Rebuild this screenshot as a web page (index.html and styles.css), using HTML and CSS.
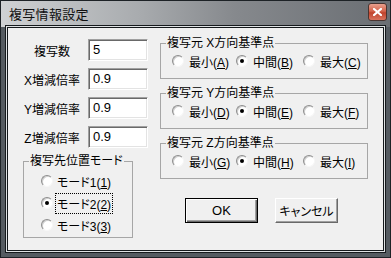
FILE: index.html
```html
<!DOCTYPE html>
<html lang="ja">
<head>
    <meta charset="UTF-8">
    <title>複写情報設定</title>
    <link rel="stylesheet" href="styles.css">
</head>
<body>
    <div class="window">
        <div class="titlebar">
            <span class="title">複写情報設定</span>
            <span class="close-btn">
                <svg width="9" height="8" viewBox="0 0 9 8"><path d="M1 1 L8 7 M8 1 L1 7" stroke="#fff" stroke-width="2.2" stroke-linecap="square"/></svg>
            </span>
        </div>

        <div class="client">
            <div class="left-col">
                <div class="field">
                    <label class="field-label">複写数</label>
                    <div class="edit">5</div>
                </div>
                <div class="field">
                    <label class="field-label">X増減倍率</label>
                    <div class="edit">0.9</div>
                </div>
                <div class="field">
                    <label class="field-label">Y増減倍率</label>
                    <div class="edit">0.9</div>
                </div>
                <div class="field">
                    <label class="field-label">Z増減倍率</label>
                    <div class="edit">0.9</div>
                </div>

                <fieldset class="group mode-group">
                    <legend>複写先位置モード</legend>
                    <div class="mode-options">
                        <div class="radio"><span class="dot"></span><span class="rtext">モード1(<u>1</u>)</span></div>
                        <div class="radio"><span class="dot checked"></span><span class="rtext focused">モード2(<u>2</u>)</span></div>
                        <div class="radio"><span class="dot"></span><span class="rtext">モード3(<u>3</u>)</span></div>
                    </div>
                </fieldset>
            </div>

            <div class="right-col">
                <fieldset class="group axis-group">
                    <legend>複写元 X方向基準点</legend>
                    <div class="axis-options">
                        <div class="radio"><span class="dot"></span><span class="rtext">最小(<u>A</u>)</span></div>
                        <div class="radio"><span class="dot checked"></span><span class="rtext">中間(<u>B</u>)</span></div>
                        <div class="radio"><span class="dot"></span><span class="rtext">最大(<u>C</u>)</span></div>
                    </div>
                </fieldset>
                <fieldset class="group axis-group">
                    <legend>複写元 Y方向基準点</legend>
                    <div class="axis-options">
                        <div class="radio"><span class="dot"></span><span class="rtext">最小(<u>D</u>)</span></div>
                        <div class="radio"><span class="dot checked"></span><span class="rtext">中間(<u>E</u>)</span></div>
                        <div class="radio"><span class="dot"></span><span class="rtext">最大(<u>F</u>)</span></div>
                    </div>
                </fieldset>
                <fieldset class="group axis-group">
                    <legend>複写元 Z方向基準点</legend>
                    <div class="axis-options">
                        <div class="radio"><span class="dot"></span><span class="rtext">最小(<u>G</u>)</span></div>
                        <div class="radio"><span class="dot checked"></span><span class="rtext">中間(<u>H</u>)</span></div>
                        <div class="radio"><span class="dot"></span><span class="rtext">最大(<u>I</u>)</span></div>
                    </div>
                </fieldset>

                <div class="buttons">
                    <button class="btn btn-default">OK</button>
                    <button class="btn btn-cancel">キャンセル</button>
                </div>
            </div>
        </div>
    </div>
</body>
</html>
```

FILE: styles.css
```css
:root {
    --face: #f0f0f0;
    --text: #000;
    --shadow: #a0a0a0;
    --dark-shadow: #696969;
    --frame: #555b61;
    --ui-font: "Liberation Sans", "Noto Sans CJK JP", sans-serif;
}

body {
    margin: 0;
    padding: 0;
    background: #fff;
    font-family: var(--ui-font);
    font-feature-settings: "palt";
    color: var(--text);
}

.window {
    width: 391px;
    height: 258px;
    box-sizing: border-box;
    border: 1px solid #1d2226;
    background: var(--frame);
    display: flex;
    flex-direction: column;
}

/* title bar */
.titlebar {
    height: 26px;
    flex: none;
    display: flex;
    align-items: center;
    justify-content: space-between;
    padding: 0 3px 0 8px;
    background: linear-gradient(to right, #cfd1d3 0%, #a9acaf 35%, #86898d 60%, #6a6e73 100%);
}

.title {
    font-size: 13px;
    color: #111;
    letter-spacing: 0.3px;
    margin-top: -1px;
}

.close-btn {
    width: 19px;
    height: 18px;
    box-sizing: border-box;
    margin-top: -4px;
    border: 1px solid #4a3430;
    border-radius: 3px;
    background: linear-gradient(to bottom, #e8a08e 0%, #d4624a 45%, #c0432c 55%, #d9735d 100%);
    display: flex;
    align-items: center;
    justify-content: center;
}

/* dialog body */
.client {
    margin: 0 6px 6px;
    flex: 1;
    border: 1px solid #15191c;
    box-shadow: 0 0 0 1px #dfe2e4, 0 0 0 2px #15191c;
    background: var(--face);
    display: flex;
    align-items: flex-start;
    font-size: 12px;
}

.left-col {
    width: 140px;
    padding: 11px 0 0 12px;
    display: flex;
    flex-direction: column;
    gap: 7px;
}

.field {
    display: flex;
    align-items: center;
}

.field-label {
    width: 64px;
    margin-right: 4px;
    text-align: center;
    font-size: 12px;
}

.edit {
    width: 60px;
    height: 22px;
    box-sizing: border-box;
    border: 1px solid;
    border-color: var(--shadow) #fff #fff var(--shadow);
    box-shadow: inset 1px 1px 0 var(--dark-shadow), inset -1px -1px 0 #e3e3e3;
    background: #fff;
    padding: 0 0 0 4px;
    font-size: 13px;
    line-height: 20px;
}

/* group boxes */
.group {
    margin: 0;
    padding: 0 0 0 5px;
    min-width: 0;
    border: 1px solid #a6a6a6;
}

.group legend {
    padding: 0 1px;
    font-size: 12px;
    line-height: 14px;
}

.mode-group {
    width: 110px;
    box-sizing: border-box;
    margin: -1px 0 0 3px;
}

.mode-options {
    padding: 5px 0 4px 12px;
    display: flex;
    flex-direction: column;
    gap: 6px;
}

.right-col {
    width: 208px;
    padding-top: 8px;
    display: flex;
    flex-direction: column;
    gap: 7px;
}

.axis-options {
    padding: 3px 0 9px 6px;
    display: grid;
    grid-template-columns: 64px 67px auto;
}

.radio {
    height: 16px;
    display: flex;
    align-items: center;
    gap: 5px;
    white-space: nowrap;
}

.mode-options .radio {
    gap: 4px;
}

.dot {
    width: 12px;
    height: 12px;
    box-sizing: border-box;
    border-radius: 50%;
    border: 1px solid;
    border-color: #8d8d8d #f6f6f6 #f6f6f6 #8d8d8d;
    box-shadow: inset 1px 1px 0 #cfcfcf;
    background: #fff;
    display: flex;
    align-items: center;
    justify-content: center;
    flex: none;
}

.dot.checked::after {
    content: "";
    width: 4px;
    height: 4px;
    border-radius: 50%;
    background: #000;
}

.rtext u {
    text-underline-offset: 1px;
}

.focused {
    outline: 1px dotted #000;
    outline-offset: 1px;
}

/* buttons */
.buttons {
    display: flex;
    gap: 17px;
    padding-left: 25px;
    margin-top: 12px;
}

.btn {
    height: 25px;
    box-sizing: border-box;
    background: var(--face);
    font-family: var(--ui-font);
    font-feature-settings: "palt";
    font-size: 12px;
    color: #000;
    padding: 0;
    border: 1px solid;
    border-color: #fff var(--dark-shadow) var(--dark-shadow) #fff;
    box-shadow: inset -1px -1px 0 var(--shadow);
}

.btn-default {
    width: 73px;
    border-color: #000;
    box-shadow: inset 1px 1px 0 #fff, inset -1px -1px 0 var(--dark-shadow), inset -2px -2px 0 var(--shadow);
    font-size: 13px;
}

.btn-cancel {
    width: 63px;
}
```
